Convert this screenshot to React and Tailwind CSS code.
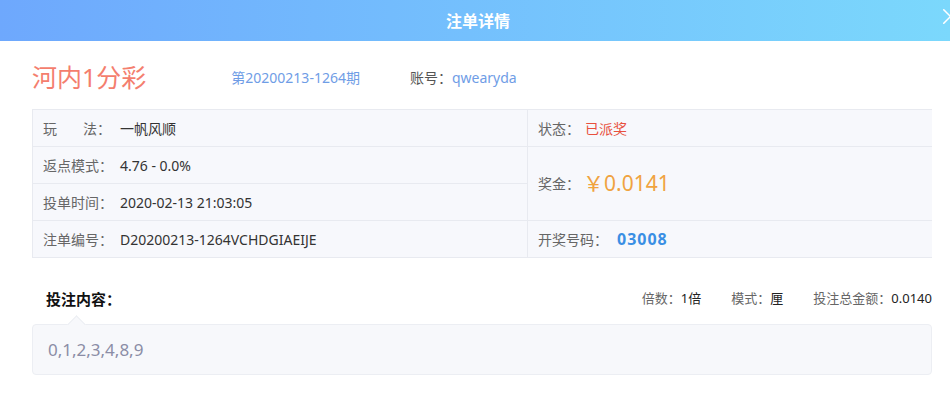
import { X } from 'lucide-react';

const font = "font-['Noto_Sans','Noto_Sans_CJK_SC',sans-serif]";

function Cell({ label, children, className = '' }) {
  return (
    <div className={`flex items-center bg-[#f7f8fc] pl-[10px] text-[14px] ${className}`}>
      {label}
      {children}
    </div>
  );
}

export default function App() {
  return (
    <div className={`relative h-[402px] w-[950px] overflow-hidden bg-white ${font}`}>

      {/* Header bar */}
      <div className="relative flex h-[41px] items-center justify-center bg-gradient-to-r from-[#6ea8fd] to-[#7bd8fc]">
        <span className="ml-[6px] text-[16px] font-bold text-white">注单详情</span>
        <X className="absolute left-[937px] top-[3px] text-white" size={27} strokeWidth={1.4} />
      </div>

      <div className="w-[900px] ml-[32px]">

        {/* Lottery name, issue, account */}
        <div className="flex h-[68px] items-center pt-[5px]">
          <span className="text-[25px] text-[#f47e6e]">河内1分彩</span>
          <span className="ml-[85px] text-[14px] text-[#6f9de6]">第20200213-1264期</span>
          <span className="ml-[50px] text-[14px] text-[#555]">账号：</span>
          <span className="text-[14px] text-[#6f9de6]">qwearyda</span>
        </div>

        {/* Detail table */}
        <div className="grid grid-cols-[494px_404px] grid-rows-[36px_36px_36px_36px] gap-px bg-[#e8eaf0] p-px">
          <Cell label={<span className="w-[77px] text-[#666]">玩<span className="inline-block w-[26px]" />法：</span>}>
            <span className="text-[#333]">一帆风顺</span>
          </Cell>
          <Cell label={<span className="w-[47px] text-[#666]">状态：</span>}>
            <span className="text-[#e8503e]">已派奖</span>
          </Cell>

          <Cell label={<span className="w-[77px] text-[#666]">返点模式：</span>}>
            <span className="text-[#333]">4.76 - 0.0%</span>
          </Cell>
          <Cell className="row-span-2" label={<span className="w-[45px] text-[#666]">奖金：</span>}>
            <span className="text-[21px] text-[#f0a340]">￥0.0141</span>
          </Cell>

          <Cell label={<span className="w-[77px] text-[#666]">投单时间：</span>}>
            <span className="text-[#333]">2020-02-13 21:03:05</span>
          </Cell>

          <Cell label={<span className="w-[77px] text-[#666]">注单编号：</span>}>
            <span className="text-[#333]">D20200213-1264VCHDGIAEIJE</span>
          </Cell>
          <Cell label={<span className="w-[79px] text-[#666]">开奖号码：</span>}>
            <span className="text-[16px] font-bold tracking-[1px] text-[#3a8fe4]">03008</span>
          </Cell>
        </div>

        {/* Bet content header */}
        <div className="mt-[31px] flex h-[20px] items-center justify-between">
          <span className="ml-[14px] text-[15px] font-bold text-[#111]">投注内容：</span>
          <div className="flex gap-[30px] text-[13px]">
            <span><span className="text-[#666]">倍数：</span><span className="text-[#222]">1倍</span></span>
            <span><span className="text-[#666]">模式：</span><span className="text-[#222]">厘</span></span>
            <span><span className="text-[#666]">投注总金额：</span><span className="text-[#222]">0.0140</span></span>
          </div>
        </div>

        {/* Bet numbers box */}
        <div className="relative mt-[15px] flex h-[51px] items-center rounded-[4px] border border-[#eceef3] bg-[#f7f8fb] pl-[15px]">
          <div className="absolute left-[37px] top-[-7px] h-[13px] w-[13px] rotate-45 border-l border-t border-[#eceef3] bg-[#f7f8fb]" />
          <span className="text-[17px] text-[#8b8da6]">0,1,2,3,4,8,9</span>
        </div>
      </div>
    </div>
  );
}
